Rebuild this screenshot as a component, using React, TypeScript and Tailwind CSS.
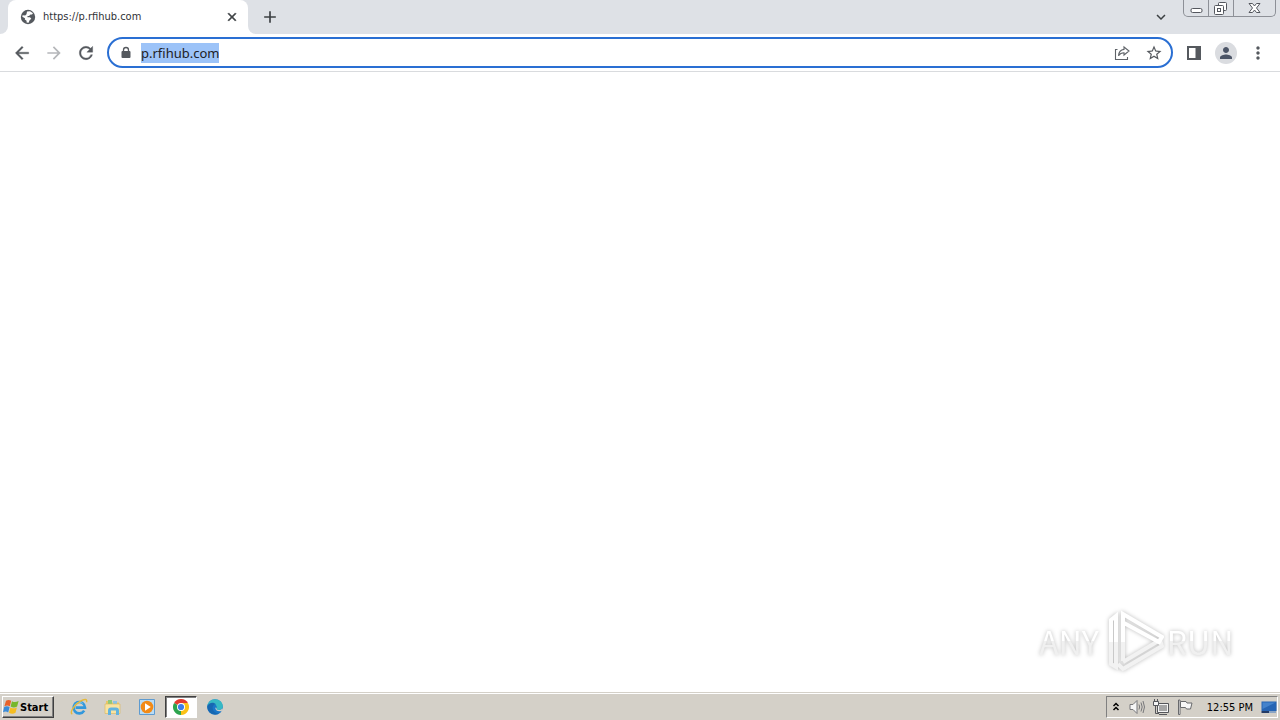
import { useEffect, useRef } from 'react';
import type { ReactNode } from 'react';
import {
  MdAdd,
  MdArrowBack,
  MdArrowForward,
  MdClose,
  MdExpandMore,
  MdMoreVert,
  MdPerson,
  MdRefresh,
  MdStarOutline
} from 'react-icons/md';

function GlobeIcon() {
  return (
    <svg viewBox="0 0 16 16" className="size-4 shrink-0">
      <circle cx="8" cy="8" r="7.2" fill="#55595e" />
      <path
        d="M7 2.5 10 2.2 13 4.2 12 5.5H10.5L9 7H7.5V8.2H10L11.3 9.7 9.6 11.3 8.6 13.7 6.6 13.6V11.8L4.8 10.6 5 9.3 2.3 7.8 2.6 6.2 5.2 6.5 6.5 5.2Z"
        fill="#fff"
      />
    </svg>
  );
}

function LockIcon() {
  return (
    <svg viewBox="0 0 14 14" className="size-3.5 shrink-0">
      <rect x="2.5" y="5" width="9" height="7" rx="1" fill="#55595e" />
      <path d="M4.5 5.5V4A2.5 2.5 0 0 1 9.5 4V5.5" fill="none" stroke="#55595e" strokeWidth="1.3" />
    </svg>
  );
}

function ShareIcon() {
  return (
    <svg viewBox="0 0 16 16" className="size-4" fill="none" stroke="#5f6368" strokeWidth="1.1">
      <path d="M3.5 4.5H1.5V14.5H13.5V12" />
      <path d="M10 2 15 6 10 10V7.8C7.5 7.8 5.8 8.8 4.5 10.8 4.8 7.2 6.5 4.8 10 4.4Z" />
    </svg>
  );
}

function SidePanelIcon() {
  return (
    <svg viewBox="0 0 16 16" className="size-4">
      <path d="M1 1H15V15H1ZM3 3V13H9.5V3Z" fill="#55595e" fillRule="evenodd" />
    </svg>
  );
}

function WindowsFlag() {
  return (
    <svg viewBox="0 0 16 16" className="size-4 shrink-0">
      <path d="M3 1.8C4.8.6 6.6.7 8.2 1.8L6.8 7.2C5 6.1 3.4 6.2 1.4 7.2Z" fill="#e8622a" />
      <path d="M9 2.2C11 3.4 13 3.3 15.6 2L14.1 7.5C11.9 8.7 9.8 8.7 7.6 7.5Z" fill="#77b72c" />
      <path d="M1.2 8C3.2 6.9 4.8 7 6.6 8.1L5.2 13.4C3.5 12.3 1.9 12.3 0 13.3Z" fill="#3a8bd8" />
      <path d="M7.4 8.4C9.4 9.6 11.6 9.6 13.9 8.4L12.5 13.8C10.3 15 8.2 14.9 6 13.8Z" fill="#f5bd21" />
    </svg>
  );
}

function ExplorerIcon() {
  return (
    <svg viewBox="0 0 18 18" className="size-[18px]" fill="none">
      <path d="M14.2 12.6A5.7 5.7 0 1 1 15 9.6H5.6" stroke="#3298dc" strokeWidth="2.6" />
      <path d="M4 8.4C5.4 4.9 10 3 12.6 5.4" stroke="#7fd0f5" strokeWidth="1" />
      <path
        d="M2.3 16.2C-1 14.5 4.3 7 10 3.4 14.5.6 17.6.8 16.5 4.2"
        stroke="#e5b93a"
        strokeWidth="1.4"
      />
    </svg>
  );
}

function FolderIcon() {
  return (
    <svg viewBox="0 0 18 18" className="size-[18px]">
      <path d="M2 3H7L8 4.5H15V15H2Z" fill="#e9c766" />
      <path d="M4 2H8V6H4Z" fill="#8fc977" />
      <path d="M9 3H13V6H9Z" fill="#8bc3e6" />
      <path d="M1 6H16V15.5H1Z" fill="#f8e3a0" stroke="#d8b65a" strokeWidth=".6" />
      <path d="M4 17V12.5Q4 9.5 7 9.5H12Q15 9.5 15 12.5V17H12V12.5H7V17Z" fill="#61b3df" />
    </svg>
  );
}

function MediaIcon() {
  return (
    <svg viewBox="0 0 18 18" className="size-[18px]">
      <path d="M1.5 1.5H16.5V16.5H1.5Z" fill="#b9dcf5" stroke="#5e9bd0" />
      <circle cx="9" cy="9" r="6.3" fill="#f28a16" />
      <path d="M7 5.2 12.8 9 7 12.8Z" fill="#fff" />
    </svg>
  );
}

function ChromeIcon() {
  return (
    <svg viewBox="0 0 16 16" className="size-4">
      <path d="M8 8 1.07 4A8 8 0 0 1 14.93 4Z" fill="#e33b2e" />
      <path d="M8 8 14.93 4A8 8 0 0 1 8 16L6 14Z" fill="#fbc116" />
      <path d="M8 8 8 16A8 8 0 0 1 1.07 4Z" fill="#2da44e" />
      <path d="M8 4H14.93L11.5 8 8 16 11.4 10Z" fill="#fbc116" />
      <circle cx="8" cy="8" r="4" fill="#fff" />
      <circle cx="8" cy="8" r="3.1" fill="#3d7de8" />
    </svg>
  );
}

function EdgeIcon() {
  return (
    <svg viewBox="0 0 16 16" className="size-4">
      <circle cx="8" cy="8" r="7.8" fill="#1976c8" />
      <path
        d="M.3 7.2C.8 3 4 .2 8 .2 12.4.2 15.8 3.4 15.8 7 15.8 9.4 14 11 11.8 11 9.6 11 9 10 9.6 9 10.4 7.4 8.8 5 5.8 5 3.4 5 1.2 6 .3 7.2Z"
        fill="#36b9c4"
      />
      <path
        d="M.3 7.2C1.6 3.6 6.8 2.6 9.2 5.6 7.2 4.8 5.8 6.4 5.6 8.4 5.5 11.8 8.4 14.8 12.4 14.4 7 17.4 0 14 .3 7.2Z"
        fill="#1767b1"
      />
      <path d="M9.6 9C9 10 9.6 11 11.8 11 13.2 11 14.4 10.4 15.1 9.4L16 11 14.5 12C10.5 12.8 8 11 8.4 8.5Z" fill="#d4d0c8" />
    </svg>
  );
}

function SpeakerIcon() {
  return (
    <svg viewBox="0 0 16 16" className="size-4" fill="none" stroke="#77777a">
      <path d="M1 5.5H4L8 1.5V14.5L4 10.5H1Z" fill="#f6f6f6" />
      <path d="M10 5.5Q11.3 8 10 10.5M12 3.5Q14.4 8 12 12.5M14 2Q17 8 14 14" />
    </svg>
  );
}

function NetworkIcon() {
  return (
    <svg viewBox="0 0 16 16" className="size-4" fill="none" stroke="#55565a">
      <path d="M4.5 4.5H15.5V13.5H4.5Z" fill="#f4f4f4" />
      <path d="M6 6H14V12H6Z" fill="#a5a5a5" stroke="none" />
      <path d="M6 15.5H14" />
      <path d="M.5 2.5H5.5V6.5H.5ZM1.5 0V2M4.5 0V2" fill="#f5f5f5" />
      <path d="M2.5 6.5V14.5H6" />
    </svg>
  );
}

function FlagIcon() {
  return (
    <svg viewBox="0 0 16 16" className="size-4" stroke="#68696c">
      <path d="M1.5 1V15.5H3V1Z" fill="#fff" />
      <path d="M3.5 2.5H9L10 4H15L13.5 10H9.5L8.5 8.5H3.5Z" fill="#f7f7f7" />
    </svg>
  );
}

function DesktopIcon() {
  return (
    <svg viewBox="0 0 16 16" className="size-4">
      <path d="M.5 2.5H15.5V12H.5Z" fill="#2765b4" />
      <path d="M1.5 3.5H14.5L1.5 10Z" fill="#4583cc" />
      <path d="M.5 12H8V14H.5Z" fill="#243b66" />
      <path d="M8 12H15V14H8Z" fill="#8ba5c4" />
    </svg>
  );
}

const windowButtons = [
  {
    label: 'Minimize',
    className: 'w-6',
    drawing: <rect x="3" y="8.5" width="11" height="4" rx="1.5" fill="#fff" />
  },
  {
    label: 'Restore',
    className: 'w-[25px] border-l border-[#8d9097]',
    drawing: (
      <>
        <rect x="5.5" y="2.5" width="8" height="8" rx="1" fill="#fff" />
        <rect x="1.5" y="5.5" width="9" height="9" rx="1" fill="#fff" />
        <rect x="4.5" y="8.5" width="3" height="3" />
      </>
    )
  },
  {
    label: 'Close window',
    className: 'flex-1 border-l border-[#8d9097]',
    drawing: (
      <path
        d="M3 3.5H6.5L8.5 6 10.5 3.5H14L10.5 8 14 12.5H10.5L8.5 10 6.5 12.5H3L6.5 8Z"
        fill="#fff"
      />
    )
  }
];

const launchers = [
  { label: 'Internet Explorer', icon: <ExplorerIcon /> },
  { label: 'File Explorer', icon: <FolderIcon /> },
  { label: 'Media Player', icon: <MediaIcon /> },
  { label: 'Google Chrome', icon: <ChromeIcon />, active: true },
  { label: 'Microsoft Edge', icon: <EdgeIcon /> }
];

function IconButton({ label, children }: { label: string; children: ReactNode }) {
  return (
    <button
      type="button"
      aria-label={label}
      className="flex size-8 shrink-0 items-center justify-center text-[#55595e]"
    >
      {children}
    </button>
  );
}

function TabStrip() {
  return (
    <div className="flex h-[34px] bg-[#dee1e6]">
      <div className="flex w-2 items-end">
        <div className="size-2 bg-white">
          <div className="size-2 rounded-br-lg bg-[#dee1e6]" />
        </div>
      </div>
      <div className="flex w-60 items-center gap-[7px] rounded-t-lg bg-white pr-2 pl-3">
        <GlobeIcon />
        <span className="flex-1 font-['DejaVu_Sans_Condensed','Noto_Sans',sans-serif] text-[11px] leading-4 text-[#303236]">
          https://p.rfihub.com
        </span>
        <button type="button" aria-label="Close tab" className="flex size-4 items-center justify-center">
          <MdClose className="size-3.5 stroke-1 text-[#3c4043] [&>path:first-child]:stroke-none" />
        </button>
      </div>
      <div className="flex w-2 items-end">
        <div className="size-2 bg-white">
          <div className="size-2 rounded-bl-lg bg-[#dee1e6]" />
        </div>
      </div>
      <button type="button" aria-label="New tab" className="flex w-7 items-center justify-center">
        <MdAdd className="size-5 text-[#3c4043]" />
      </button>
      <div className="flex-1" />
      <button type="button" aria-label="Search tabs" className="mr-2.5 flex w-6 items-center justify-center">
        <MdExpandMore className="size-[18px] text-[#3c4043]" />
      </button>
      <div className="mr-1 flex h-[17px] w-[93px] overflow-hidden rounded-b-[5px] border border-t-0 border-[#8d9097]">
        {windowButtons.map((button) => (
          <button
            key={button.label}
            type="button"
            aria-label={button.label}
            className={`flex items-center justify-center ${button.className}`}
          >
            <svg viewBox="0 0 17 16" className="h-4 w-[17px]" stroke="#54575e" fill="none">
              {button.drawing}
            </svg>
          </button>
        ))}
      </div>
    </div>
  );
}

function Toolbar() {
  const addressRef = useRef<HTMLInputElement>(null);

  useEffect(() => {
    addressRef.current?.focus();
    addressRef.current?.select();
  }, []);

  return (
    <div className="flex h-[38px] items-center border-b border-[#d9dbde] bg-white px-1.5">
      <IconButton label="Back">
        <MdArrowBack className="size-5 stroke-[0.4] [&>path:first-child]:stroke-none" />
      </IconButton>
      <IconButton label="Forward">
        <MdArrowForward className="size-5 text-[#b5b7ba]" />
      </IconButton>
      <IconButton label="Reload">
        <MdRefresh className="size-5 stroke-[0.4] [&>path:first-child]:stroke-none" />
      </IconButton>
      <div className="ml-[5px] flex h-[31px] flex-1 items-center rounded-full border-2 border-[#2a6fd3] pr-px pl-2.5">
        <LockIcon />
        <input
          ref={addressRef}
          type="text"
          aria-label="Address and search bar"
          defaultValue="p.rfihub.com"
          className="ml-2 h-5 min-w-0 flex-1 font-['Noto_Sans',sans-serif] text-[13px] leading-5 text-[#202124] outline-none selection:bg-[#9cc3f8] selection:text-[#202124]"
        />
        <IconButton label="Share this page">
          <ShareIcon />
        </IconButton>
        <IconButton label="Bookmark this page">
          <MdStarOutline className="size-[18px]" />
        </IconButton>
      </div>
      <div className="ml-[5px] flex">
        <IconButton label="Side panel">
          <SidePanelIcon />
        </IconButton>
        <IconButton label="Profile">
          <span className="flex size-[22px] items-center justify-center rounded-full bg-[#dadce0]">
            <MdPerson className="size-[18px] text-[#4c5567]" />
          </span>
        </IconButton>
        <IconButton label="Menu">
          <MdMoreVert className="size-5" />
        </IconButton>
      </div>
    </div>
  );
}

function Watermark() {
  return (
    <div className="absolute right-12 bottom-5 flex items-center gap-1 font-['Noto_Sans_CJK_SC',sans-serif] text-[32px] leading-[48px] drop-shadow-[0_0_2px_#bbb]">
      <span className="flex w-16 justify-center bg-linear-to-b from-white from-50% to-[#f0f0f0] to-50% bg-clip-text text-transparent">
        ANY
      </span>
      <svg viewBox="0 0 59 62" className="h-[62px] w-[59px]" fill="none" strokeWidth="4">
        <path d="M13 54 18 59 57 36 55 30 18 52" stroke="#f2f2f2" />
        <path d="M6 31V54L11 57V31" stroke="#f2f2f2" />
        <path d="M6 32V10L11 6V32" stroke="#fff" />
        <path d="M18 51V31" stroke="#f2f2f2" />
        <path d="M18 32V4L57 27 54 32 19 13" stroke="#fff" />
      </svg>
      <span className="flex w-16 justify-center bg-linear-to-b from-white from-50% to-[#f0f0f0] to-50% bg-clip-text text-transparent">
        RUN
      </span>
    </div>
  );
}

function Taskbar() {
  return (
    <footer className="flex h-7 items-center border-t border-[#d4d0c8] bg-[#d4d0c8] px-0.5 shadow-[inset_0_1px_0_#fff]">
      <button
        type="button"
        className="flex h-[22px] w-[52px] items-center gap-px border border-t-white border-r-[#404040] border-b-[#404040] border-l-white font-['DejaVu_Sans_Condensed','DejaVu_Sans',sans-serif] text-[11px] leading-[14px] font-bold text-black shadow-[inset_-1px_-1px_0_#808080]"
      >
        <WindowsFlag />
        <span className="pt-0.5">Start</span>
      </button>
      <div className="ml-[9px] flex flex-1 gap-0.5">
        {launchers.map((launcher) => (
          <button
            key={launcher.label}
            type="button"
            aria-label={launcher.label}
            className={
              launcher.active
                ? 'flex h-[22px] w-8 items-center justify-center border border-t-[#404040] border-r-white border-b-white border-l-[#404040] bg-white shadow-[inset_1px_1px_0_#808080]'
                : 'flex h-[22px] w-8 items-center justify-center'
            }
          >
            {launcher.icon}
          </button>
        ))}
      </div>
      <div className="flex h-[22px] items-center gap-2 border border-t-[#808080] border-r-white border-b-white border-l-[#808080] pl-1">
        <button type="button" aria-label="Show hidden icons" className="flex w-2.5 justify-center">
          <svg viewBox="0 0 8 10" className="h-2.5 w-2" fill="none" stroke="#000" strokeWidth="1.5">
            <path d="M1.5 4 4 1.5 6.5 4M1.5 8 4 5.5 6.5 8" />
          </svg>
        </button>
        <SpeakerIcon />
        <NetworkIcon />
        <FlagIcon />
        <time className="ml-1.5 pt-0.5 font-['DejaVu_Sans_Condensed','DejaVu_Sans',sans-serif] text-[11px] leading-[14px] text-black">
          12:55 PM
        </time>
        <DesktopIcon />
      </div>
    </footer>
  );
}

export default function App() {
  return (
    <div className="flex min-h-screen flex-col bg-white">
      <header>
        <TabStrip />
        <Toolbar />
      </header>
      <main className="relative flex-1 bg-white">
        <Watermark />
      </main>
      <Taskbar />
    </div>
  );
}
